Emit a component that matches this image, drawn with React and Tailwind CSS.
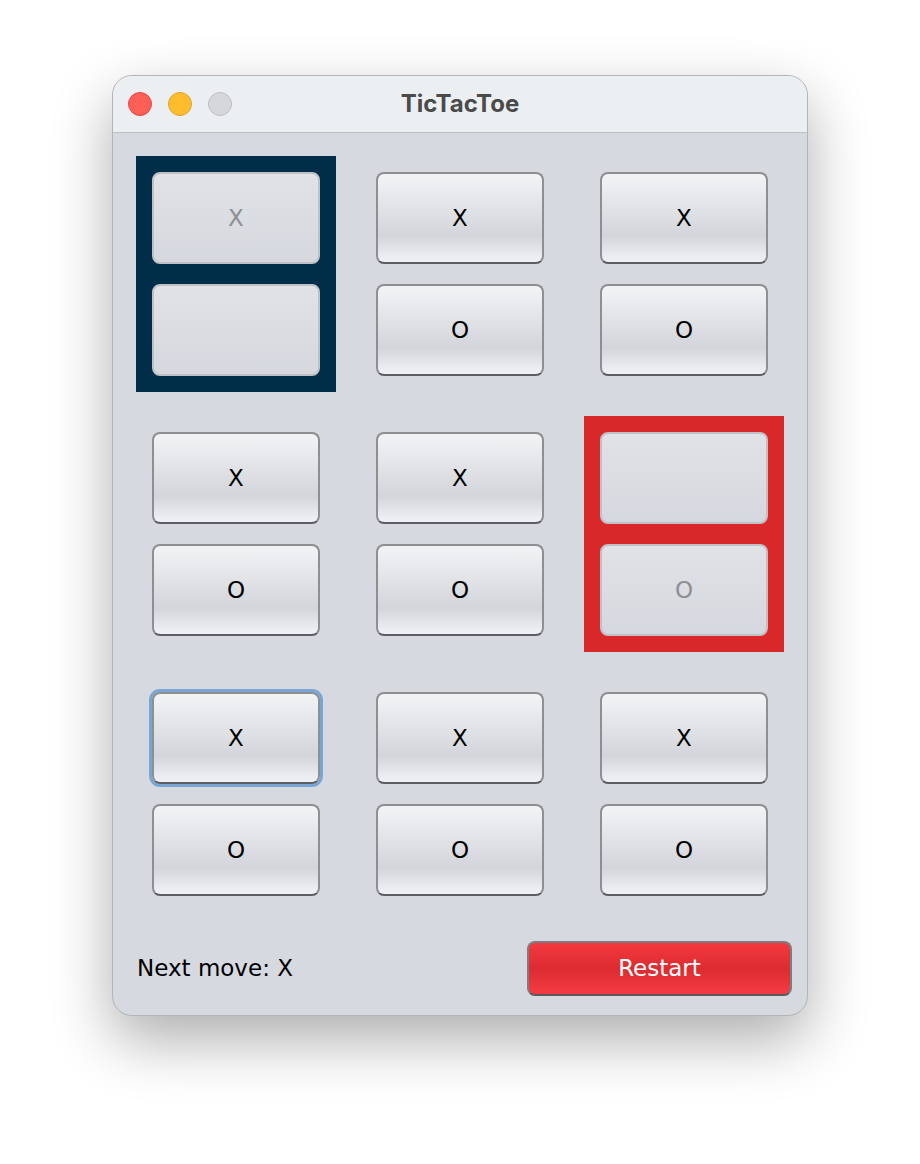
import React from "react"

const board = [
  [
    { panel: "navy", cells: [{ t: "X", off: true }, { t: "", off: true }] },
    { cells: [{ t: "X" }, { t: "O" }] },
    { cells: [{ t: "X" }, { t: "O" }] },
  ],
  [
    { cells: [{ t: "X" }, { t: "O" }] },
    { cells: [{ t: "X" }, { t: "O" }] },
    { panel: "red", cells: [{ t: "", off: true }, { t: "O", off: true }] },
  ],
  [
    { cells: [{ t: "X", focus: true }, { t: "O" }] },
    { cells: [{ t: "X" }, { t: "O" }] },
    { cells: [{ t: "X" }, { t: "O" }] },
  ],
]

const Cell = ({ t, off, focus }) => {
  if (off) {
    return (
      <button className="w-[168px] h-[92px] rounded-[8px] border-2 border-[#bfc1c6] bg-[linear-gradient(to_bottom,#e0e2e6,#d5d8de)] text-[23px] text-[#8e8f92]">
        {t}
      </button>
    )
  }
  return (
    <button
      className={
        "w-[168px] h-[92px] rounded-[8px] border-2 border-[#8d8f93] border-b-[#5d5e61] bg-[linear-gradient(to_bottom,#f3f4f6,#e0e2e6_40%,#d3d5db_70%,#f0f2f7)] text-[23px] text-black " +
        (focus ? "ring-[3px] ring-[#7aa6d6]" : "")
      }
    >
      {t}
    </button>
  )
}

const Panel = ({ panel, cells }) => {
  const bg = panel === "navy" ? "bg-[#002e48]" : panel === "red" ? "bg-[#d8282a]" : ""
  return (
    <div className={"w-[200px] h-[236px] p-4 flex flex-col gap-5 " + bg}>
      {cells.map((c, i) => (
        <Cell key={i} {...c} />
      ))}
    </div>
  )
}

const App = () => {
  return (
    <div className="w-[920px] h-[1164px] bg-white pt-[75px] pl-[112px]" style={{ fontFamily: '"DejaVu Sans", sans-serif' }}>
      <div className="w-[696px] h-[941px] rounded-[20px] border border-[#b3b4b6] bg-[#d6d9e0] overflow-hidden shadow-[0_24px_60px_rgba(0,0,0,0.32)]">
        <div className="relative h-[57px] bg-[#eceff2] border-b border-[#bcbec1] flex items-center justify-center">
          <div className="absolute left-[15px] top-[16px] flex gap-4">
            <span className="w-6 h-6 rounded-full bg-[#fe5f57] border border-[#e2463f]" />
            <span className="w-6 h-6 rounded-full bg-[#febc2e] border border-[#dea123]" />
            <span className="w-6 h-6 rounded-full bg-[#d5d7da] border border-[#bcbec2]" />
          </div>
          <span className="text-[24px] font-bold text-[#4a4a4a]" style={{ fontFamily: 'Inter, sans-serif' }}>
            TicTacToe
          </span>
        </div>
        <div className="px-[23px] pt-[23px] flex flex-col gap-6">
          {board.map((row, r) => (
            <div key={r} className="flex gap-6">
              {row.map((p, i) => (
                <Panel key={i} {...p} />
              ))}
            </div>
          ))}
        </div>
        <div className="mt-[29px] pl-[24px] pr-[15px] flex items-center justify-between">
          <span className="text-[23px] text-black">Next move: X</span>
          <button className="w-[265px] h-[55px] rounded-[8px] border-2 border-[#7c7d80] border-b-[#5a5b5e] bg-[linear-gradient(to_bottom,#f4393f,#dc2c31_50%,#f53b41)] text-[23px] text-white">
            Restart
          </button>
        </div>
      </div>
    </div>
  )
}

export default App
